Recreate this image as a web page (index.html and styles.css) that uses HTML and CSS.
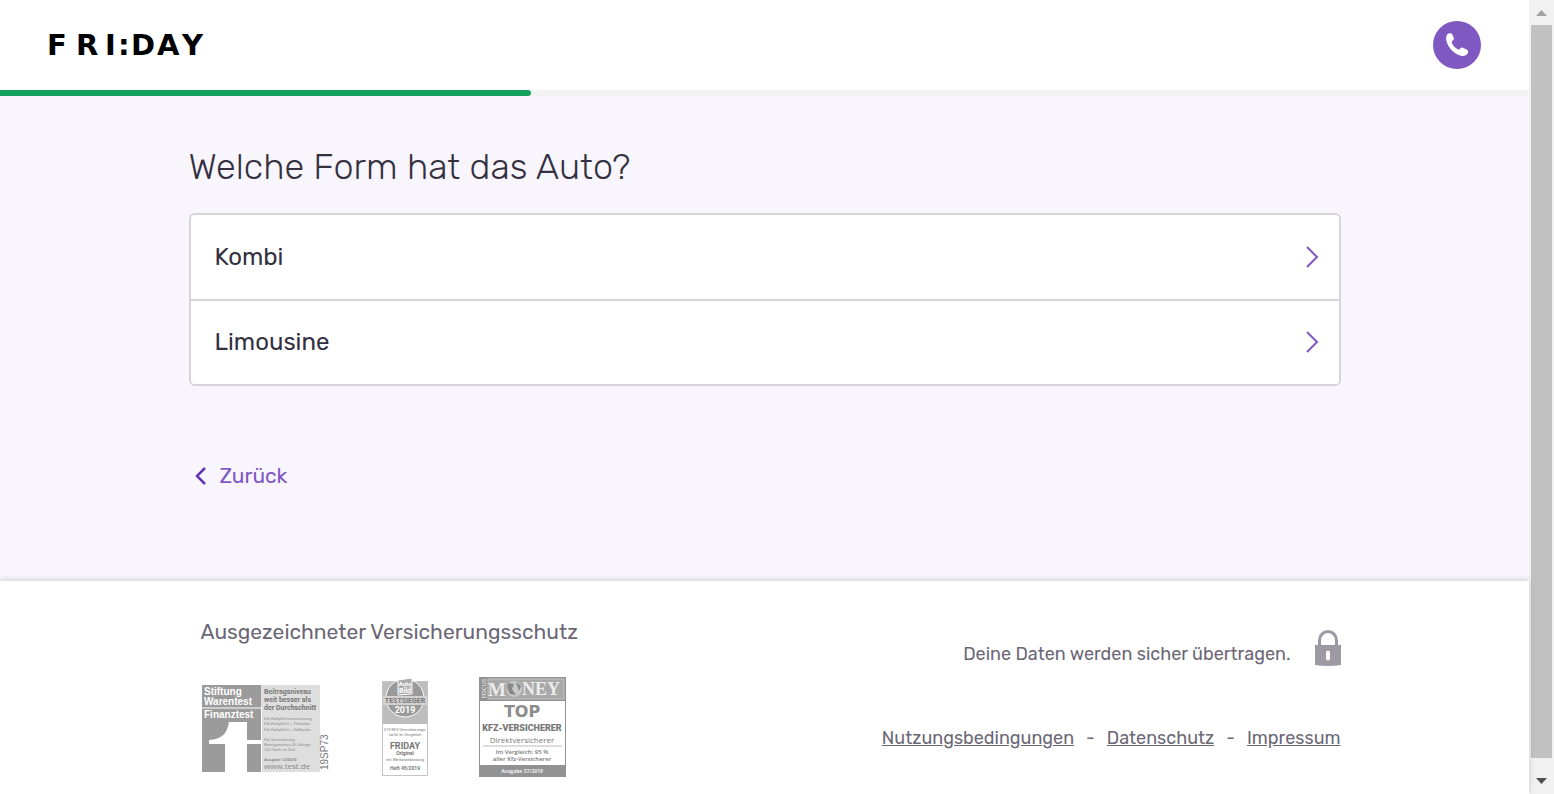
FILE: index.html
```html
<!DOCTYPE html>
<html lang="de">
<head>
<meta charset="utf-8">
<meta name="viewport" content="width=device-width, initial-scale=1">
<title>FRI:DAY – Welche Form hat das Auto?</title>
<link rel="stylesheet" href="styles.css">
</head>
<body>
<div class="window">
  <div class="page">
    <header class="header">
      <a class="logo" href="#" aria-label="FRI:DAY">
        <svg width="160" height="24" viewBox="0 0 160 24"><text class="logo-text" y="22" x="-1 28 57 70 83 109 134">FRI:DAY</text></svg>
      </a>
      <button class="call" type="button" aria-label="Anrufen">
        <svg width="24" height="26" viewBox="0 0 24 26"><path fill="#fff" d="M3 1.800C4.500 .8 6.600 1 7.300 2.500L8.800 5.800C9.300 7.200 8.600 8.400 6.900 9C6.600 10.800 7.400 12.600 8.900 14.300C10.500 16.200 12.300 17.500 14.500 17.800C15.200 16 16.400 15.200 17.800 15.700L21.600 17.400C23.300 18.200 23.600 20 22.600 21.600C21.500 23.500 19.200 24.400 16.500 23.900C12.600 23.200 8.600 20.500 5.600 17C2.500 13.300 1 9.300 1.100 5.800C1.200 4 1.800 2.600 3 1.800Z"/></svg>
      </button>
    </header>
    <div class="progress"><div class="progress-bar"></div></div>

    <main class="main">
      <div class="container">
        <h1 class="title">Welche Form hat das Auto?</h1>
        <div class="options">
          <button class="option" type="button">Kombi
            <svg width="16" height="24" viewBox="0 0 16 24"><path d="M2 2L12 12L2 22"/></svg>
          </button>
          <button class="option" type="button">Limousine
            <svg width="16" height="24" viewBox="0 0 16 24"><path d="M2 2L12 12L2 22"/></svg>
          </button>
        </div>
        <a class="back" href="#">
          <svg width="12" height="18" viewBox="0 0 12 18"><path d="M10 1L2 9L10 17"/></svg>
          Zurück
        </a>
      </div>
    </main>

    <footer class="footer">
      <div class="container footer-row">
        <section class="awards">
          <h2 class="awards-title">Ausgezeichneter Versicherungsschutz</h2>
          <div class="seals">
            <svg class="seal-test" width="130" height="100" viewBox="0 0 130 100" role="img" aria-label="Stiftung Warentest Finanztest">
              <rect x="1" y="8" width="118" height="87" fill="#dedede"/>
              <rect x="1" y="8" width="59" height="87" fill="#9b9b9b"/>
              <path d="M0 31H60.500V95" fill="none" stroke="#fff"/>
              <path d="M8 63C21 62 26 57 28 45H46V63H60V67H46V95H24V67H8Z" fill="#fff"/>
              <g class="grotesk" font-weight="bold" fill="#fff" font-size="10">
                <text x="3" y="18">Stiftung</text><text x="3" y="28">Warentest</text><text x="3" y="41">Finanztest</text>
              </g>
              <g class="roboto" font-weight="bold" fill="#777" font-size="7">
                <text x="63" y="17">Beitragsniveau</text><text x="63" y="25">weit besser als</text><text x="63" y="33">der Durchschnitt</text>
              </g>
              <g class="grotesk" fill="#888" font-size="4">
                <text x="63" y="43">Kfz-Haftpflichtversicherung</text><text x="63" y="48">Kfz-Haftpflicht + Teilkasko</text><text x="63" y="54">Kfz-Haftpflicht + Vollkasko</text>
                <text x="63" y="64">Kfz-Versicherung:</text><text x="63" y="69">Beitragsniveau 40-Jährige</text><text x="63" y="74">150 Tarife im Test</text>
                <text x="63" y="84" font-weight="bold">Ausgabe 12/2019</text>
              </g>
              <text class="sans" x="63" y="92" font-size="8" fill="#888">www.test.de</text>
              <text class="grotesk" transform="translate(127 93) rotate(-90)" font-size="10" fill="#777">19SP73</text>
            </svg>
            <svg class="seal-auto" width="46" height="100" viewBox="0 0 46 100" role="img" aria-label="Auto Bild Testsieger 2019">
              <rect x=".5" y="4.500" width="45" height="94" fill="#fff" stroke="#c4c4c4"/>
              <rect x="1" y="5" width="44" height="42" fill="#bdbdbd"/>
              <circle cx="23" cy="21" r="19" fill="#999" stroke="#fff"/>
              <path d="M1 19H45V28H1Z" fill="#d2d2d2"/>
              <path d="M16 3L30 1V17L16 18Z" fill="#aaa" stroke="#fff"/>
              <g class="roboto" text-anchor="middle" font-weight="bold" fill="#fff">
                <text x="23" y="9" font-size="6">Auto</text><text x="23" y="16" font-size="7">Bild</text><text x="23" y="36" font-size="9">2019</text>
              </g>
              <g class="roboto" text-anchor="middle" fill="#777">
                <text x="23" y="26" font-size="7" font-weight="bold">TESTSIEGER</text>
                <text x="23" y="54" font-size="4">319 KFZ-Versicherungs-</text><text x="23" y="59" font-size="4">tarife im Vergleich</text>
                <text x="23" y="72" font-size="9" font-weight="bold">FRIDAY</text><text x="23" y="78" font-size="5" font-weight="bold">Original</text>
                <text x="23" y="84" font-size="4">mit Werkstattbindung</text><text x="23" y="93" font-size="5" font-weight="bold">Heft 45/2019</text>
              </g>
            </svg>
            <svg class="seal-money" width="87" height="100" viewBox="0 0 87 100" role="img" aria-label="Focus Money Top Kfz-Versicherer">
              <rect width="87" height="100" fill="#929292"/>
              <rect x="9" y="2" width="76" height="20" fill="#a9a9a9" stroke="#c3c3c3"/>
              <rect x="1" y="24" width="85" height="64" fill="#fff"/>
              <circle cx="35" cy="12" r="8" fill="#c8c8c8"/><path d="M29 6L35 7L33 12L37 18L31 17L28 11ZM37 5L42 9L40 14Z" fill="#888"/>
              <g class="serif" font-weight="bold" fill="#ececec">
                <text x="9" y="19" font-size="19">M</text>
                <text x="43" y="18" font-size="18">NEY</text>
              </g>
              <text class="sans" transform="translate(7 21) rotate(-90)" font-size="6" fill="#fff">FOCUS</text>
              <g class="roboto" text-anchor="middle" fill="#777">
                <text class="wide" x="43" y="40" font-size="16" font-weight="bold" fill="#8c8c8c">TOP</text>
                <text x="43" y="54" font-size="9" font-weight="900">KFZ-VERSICHERER</text>
                <text class="sans" x="43" y="66" font-size="8">Direktversicherer</text>
                <path d="M4 69H83" stroke="#bbb"/>
                <text class="sans" x="43" y="77" font-size="6" font-weight="600">Im Vergleich: 95 %</text><text class="sans" x="43" y="84" font-size="6" font-weight="600">aller Kfz-Versicherer</text>
                <text class="sans" x="43" y="96" font-size="5" font-weight="bold" fill="#eee">Ausgabe 37/2019</text>
              </g>
            </svg>
          </div>
        </section>
        <section class="legal">
          <p class="secure">Deine Daten werden sicher übertragen.
            <svg width="26" height="36" viewBox="0 0 26 36"><path d="M4.500 17V10.500a8.500 9 0 0 1 17 0V17" fill="none" stroke="#9c99a5" stroke-width="3"/><path fill="#9c99a5" fill-rule="evenodd" d="M0 15H26V35Q13 37 0 35ZM13 20.500a2 2 0 0 0-2 2v6a2 2 0 0 0 4 0v-6a2 2 0 0 0-2-2Z"/></svg>
          </p>
          <nav class="links">
            <a href="#">Nutzungsbedingungen</a><span>-</span><a href="#">Datenschutz</a><span>-</span><a href="#">Impressum</a>
          </nav>
        </section>
      </div>
    </footer>
  </div>
  <div class="scrollbar" aria-hidden="true">
    <svg width="25" height="25" viewBox="0 0 25 25"><path d="M7 16L12.500 10L18 16Z" fill="#a3a3a3"/></svg>
    <div class="thumb"></div>
    <svg class="scroll-down" width="25" height="25" viewBox="0 0 25 25"><path d="M7 9L12.500 15L18 9Z" fill="#505050"/></svg>
  </div>
</div>
</body>
</html>
```
FILE: styles.css
```css
* { box-sizing: border-box; }

body {
  margin: 0;
  font-family: Rubik, Inter, "Open Sans", sans-serif;
  color: #34303f;
  background: #fff;
}

.window { display: flex; min-height: 100vh; }
.page { flex: 1; min-width: 0; display: flex; flex-direction: column; }

.header {
  display: flex;
  align-items: center;
  justify-content: space-between;
  padding: 21px 48px;
}
.logo { display: flex; }
.logo svg { overflow: visible; }
.logo-text { font-family: "DejaVu Sans", sans-serif; font-size: 29px; font-weight: bold; fill: #000; }
.call {
  display: flex;
  align-items: center;
  justify-content: center;
  width: 48px;
  height: 48px;
  padding: 0;
  border: 0;
  border-radius: 50%;
  background: #7f58c1;
}

.progress { height: 6px; background: #f3f3f3; }
.progress-bar { width: 34.7%; height: 100%; background: #13a35f; border-radius: 0 3px 3px 0; }

.main { flex: 1; padding: 48px 24px 88px; background: #f8f5fd; }
.container { width: 100%; max-width: 1152px; margin: 0 auto; }

.title { margin: 0 0 23px; font-size: 36px; line-height: 46px; font-weight: 300; }

.options { border: 2px solid #d5d4da; border-radius: 6px; background: #fff; overflow: hidden; }
.option {
  display: flex;
  align-items: center;
  justify-content: space-between;
  width: 100%;
  padding: 26px 18px 26px 24px;
  border: 0;
  background: #fff;
  color: inherit;
  font: inherit;
  font-size: 24px;
  line-height: 32px;
  text-align: left;
}
.option + .option { padding-top: 25px; border-top: 2px solid #d5d4da; }
.option path, .back path { fill: none; stroke: #7f58c1; stroke-width: 2; }

.back {
  display: inline-flex;
  align-items: center;
  gap: 13px;
  margin-top: 76px;
  padding-left: 6px;
  color: #7f58c1;
  font-size: 21px;
  line-height: 28px;
  text-decoration: none;
}
.back path { stroke: #6535b5; stroke-width: 2.5; }

.footer {
  position: relative;
  padding: 36px 24px 17px;
  background: #fff;
  box-shadow: 0 -1px 6px rgba(60, 50, 80, 0.2);
  color: #6b6775;
}
.footer-row { display: flex; justify-content: space-between; padding-left: 12px; }
.awards-title { margin: 0 0 30px; font-size: 21px; line-height: 30px; font-weight: 400; }
.seals { display: flex; gap: 51px; }

.legal { display: flex; flex-direction: column; align-items: flex-end; padding-top: 13px; font-size: 18px; line-height: 24px; }
.secure { display: flex; align-items: flex-end; gap: 24px; margin: 0; }
.links { display: flex; gap: 12px; margin-top: 60px; }
.links a { color: inherit; }

.grotesk { font-family: "Liberation Sans", sans-serif; }
.sans { font-family: "Open Sans", sans-serif; }
.serif { font-family: "Liberation Serif", serif; }
.roboto { font-family: Roboto, sans-serif; }
.wide { font-family: "DejaVu Sans", sans-serif; }

.scrollbar { display: flex; flex-direction: column; width: 25px; background: #f1f1f1; }
.thumb { flex: 1; margin: 0 2px; background: #c1c1c1; }
.scroll-down { margin-top: 11px; }
```
